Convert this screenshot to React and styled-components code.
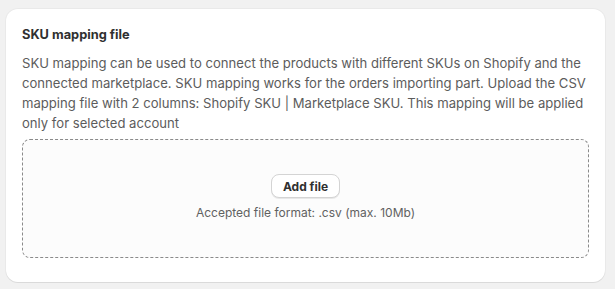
import styled, { createGlobalStyle } from "styled-components";

const Global = createGlobalStyle`
  body {
    margin: 0;
    background: #f1f1f1;
    font-family: Inter, "Noto Sans", sans-serif;
    -webkit-font-smoothing: antialiased;
  }
`;

const Page = styled.div`
  padding: 9px 10px 6px 6px;
`;

const Card = styled.section`
  width: 599px;
  box-sizing: border-box;
  background: #fff;
  border-radius: 12px;
  padding: 16px 16px 24px;
  box-shadow: 0 1px 0 0 rgba(26, 26, 26, 0.07), 0 0 0 1px rgba(0, 0, 0, 0.03);
  display: flex;
  flex-direction: column;
`;

const Title = styled.h2`
  margin: 0;
  font-size: 12.8px;
  line-height: 20px;
  font-weight: 650;
  color: #303030;
`;

const Text = styled.p`
  margin: 8px -12px 0 0;
  font-size: 13.1px;
  line-height: 20px;
  color: #5c5c5c;
`;

const Dropzone = styled.div`
  margin-top: 6px;
  height: 119px;
  box-sizing: border-box;
  border: 1px dashed #8a8a8a;
  border-radius: 8px;
  background: #fcfcfc;
  display: flex;
  flex-direction: column;
  align-items: center;
  justify-content: center;
  gap: 5px;
`;

const Button = styled.button`
  font-family: inherit;
  font-size: 12px;
  font-weight: 650;
  color: #303030;
  background: #fff;
  border: 1px solid #d4d4d4;
  border-radius: 8px;
  height: 24px;
  padding: 0 11px;
  box-shadow: 0 1px 0 0 rgba(0, 0, 0, 0.08);
  cursor: pointer;
`;

const Hint = styled.span`
  font-size: 12px;
  line-height: 20px;
  color: #616161;
`;

export default function App() {
  return (
    <>
      <Global />
      <Page>
        <Card>
          <Title>SKU mapping file</Title>
          <Text>
            SKU mapping can be used to connect the products with different SKUs on Shopify and the
            connected marketplace. SKU mapping works for the orders importing part. Upload the CSV
            mapping file with 2 columns: Shopify SKU | Marketplace SKU. This mapping will be applied
            only for selected account
          </Text>
          <Dropzone>
            <Button>Add file</Button>
            <Hint>Accepted file format: .csv (max. 10Mb)</Hint>
          </Dropzone>
        </Card>
      </Page>
    </>
  );
}
